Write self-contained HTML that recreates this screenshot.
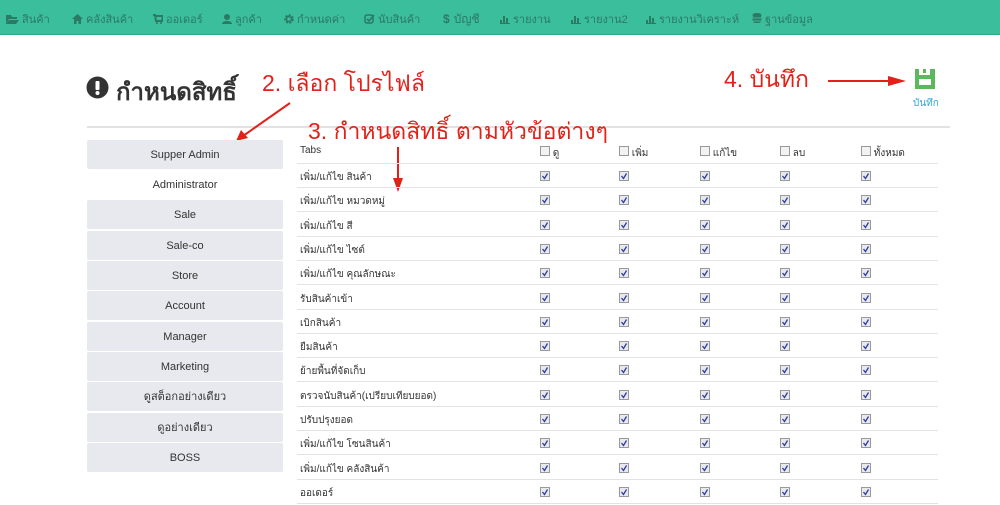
<!DOCTYPE html>
<html><head><meta charset="utf-8"><style>
*{margin:0;padding:0;box-sizing:border-box}
body{width:1000px;height:505px;overflow:hidden;background:#fff;font-family:"Liberation Sans","Noto Sans CJK SC",sans-serif;position:relative;color:#333}
.nav{position:absolute;left:0;top:0;width:1000px;height:35px;background:#3bbe9c;border-bottom:1px solid #2fa886}
.ni{position:absolute;top:10px;font-size:11px;color:#2b7a64;white-space:nowrap}
.ni svg{vertical-align:-1px;margin-right:3px}
.a{position:absolute;white-space:nowrap}
.sb{position:absolute;left:87px;width:196px;height:29px;background:#e7e9ee;font-size:11px;text-align:center;line-height:31px;color:#333;border-radius:2px}
.row{position:absolute;left:297px;width:641px;height:24px;border-bottom:1px solid #e3e3e3;font-size:10px;color:#333}
.row span{position:absolute;left:3px;top:6px}
.cb{position:absolute;top:7px;width:10px;height:10px}
.red{color:#e32119;font-size:23px;font-family:"Liberation Sans","Noto Sans CJK SC",sans-serif;font-weight:300}
</style></head><body>
<div class="nav">
<div class="ni" style="left:6px"><svg width="13" height="10"><path d="M0 1h5l1 2h5v2H3L0 10z M3 6h10l-3 4H0z" fill="#2b7a64"/></svg>สินค้า</div>
<div class="ni" style="left:72px"><svg width="11" height="10"><path d="M5.5 0L11 5H9v5H6.5V7h-2v3H2V5H0z" fill="#2b7a64"/></svg>คลังสินค้า</div>
<div class="ni" style="left:153px"><svg width="10" height="10"><path d="M0 1h2l1 6h6l1-5H3" fill="none" stroke="#2b7a64" stroke-width="2"/><circle cx="4" cy="9" r="1" fill="#2b7a64"/><circle cx="8" cy="9" r="1" fill="#2b7a64"/></svg>ออเดอร์</div>
<div class="ni" style="left:222px"><svg width="10" height="10"><circle cx="5" cy="3" r="3" fill="#2b7a64"/><path d="M0 10c0-4 10-4 10 0z" fill="#2b7a64"/></svg>ลูกค้า</div>
<div class="ni" style="left:284px"><svg width="10" height="10"><circle cx="5" cy="5" r="3.5" fill="none" stroke="#2b7a64" stroke-width="2.5" stroke-dasharray="2 1.2"/><circle cx="5" cy="5" r="2.5" fill="none" stroke="#2b7a64" stroke-width="1.5"/></svg>กำหนดค่า</div>
<div class="ni" style="left:364px"><svg width="11" height="10"><rect x="1" y="1" width="8" height="8" rx="2" fill="none" stroke="#2b7a64" stroke-width="1.5"/><path d="M3 5l2 2 5-6" fill="none" stroke="#2b7a64" stroke-width="1.6"/></svg>นับสินค้า</div>
<div class="ni" style="left:443px;font-size:12px"><b style="margin-right:4px">$</b>บัญชี</div>
<div class="ni" style="left:500px"><svg width="10" height="10"><path d="M0 10h10M1 6v4M4 2v8M7 4v6" stroke="#2b7a64" stroke-width="2"/></svg>รายงาน</div>
<div class="ni" style="left:571px"><svg width="10" height="10"><path d="M0 10h10M1 6v4M4 2v8M7 4v6" stroke="#2b7a64" stroke-width="2"/></svg>รายงาน2</div>
<div class="ni" style="left:646px"><svg width="10" height="10"><path d="M0 10h10M1 6v4M4 2v8M7 4v6" stroke="#2b7a64" stroke-width="2"/></svg>รายงานวิเคราะห์</div>
<div class="ni" style="left:752px"><svg width="10" height="11"><ellipse cx="5" cy="2" rx="4.5" ry="2" fill="#2b7a64"/><rect x=".5" y="2" width="9" height="8" rx="3" fill="#2b7a64"/><path d="M0 5h10M0 8h10" stroke="#3bbe9c"/></svg>ฐานข้อมูล</div>
</div>

<svg class="a" style="left:86px;top:76px" width="23" height="23"><circle cx="11.5" cy="11.5" r="11" fill="#333"/><rect x="9.5" y="5" width="4" height="9" rx="1" fill="#fff"/><circle cx="11.5" cy="17" r="2" fill="#fff"/></svg>
<div class="a" style="left:116px;top:72px;font-size:24px;font-weight:bold;color:#333">กำหนดสิทธิ์</div>
<div class="a" style="left:87px;top:126px;width:863px;height:2px;background:#e2e2e2"></div>

<div class="a red" style="left:262px;top:66px">2. เลือก โปรไฟล์</div>
<div class="a red" style="left:308px;top:114px">3. กำหนดสิทธิ์ ตามหัวข้อต่างๆ</div>
<div class="a red" style="left:724px;top:62px">4. บันทึก</div>
<svg class="a" style="left:0;top:0" width="1000" height="505">
<path d="M290 103L243 136" stroke="#e32119" stroke-width="2"/><path d="M236 141l5-11 7 8z" fill="#e32119"/>
<path d="M398 147v34" stroke="#e32119" stroke-width="2"/><path d="M393 178h10l-5 14z" fill="#e32119"/>
<path d="M828 81h63" stroke="#e32119" stroke-width="2"/><path d="M888 76l18 5-18 5z" fill="#e32119"/>
<path d="M915 69h4v6h11v-6h5v20h-20z" fill="#5cb85c"/><rect x="923" y="69" width="3" height="4" fill="#5cb85c"/><rect x="919" y="79" width="12" height="6" fill="#fff"/>
</svg>
<div class="a" style="left:913px;top:96px;font-size:10px;color:#2ea7d8">บันทึก</div>

<div class="sb" style="top:140px">Supper Admin</div>
<div class="sb" style="top:170px;background:#fff">Administrator</div>
<div class="sb" style="top:200px">Sale</div>
<div class="sb" style="top:231px">Sale-co</div>
<div class="sb" style="top:261px">Store</div>
<div class="sb" style="top:291px">Account</div>
<div class="sb" style="top:322px">Manager</div>
<div class="sb" style="top:352px">Marketing</div>
<div class="sb" style="top:382px">ดูสต็อกอย่างเดียว</div>
<div class="sb" style="top:413px">ดูอย่างเดียว</div>
<div class="sb" style="top:443px">BOSS</div>

<div class="row" style="top:140px"><span style="top:5px">Tabs</span>
<span style="left:243px"><svg width="10" height="10"><rect x=".5" y=".5" width="9" height="9" fill="#f2f2f2" stroke="#999"/></svg> ดู</span>
<span style="left:322px"><svg width="10" height="10"><rect x=".5" y=".5" width="9" height="9" fill="#f2f2f2" stroke="#999"/></svg> เพิ่ม</span>
<span style="left:403px"><svg width="10" height="10"><rect x=".5" y=".5" width="9" height="9" fill="#f2f2f2" stroke="#999"/></svg> แก้ไข</span>
<span style="left:483px"><svg width="10" height="10"><rect x=".5" y=".5" width="9" height="9" fill="#f2f2f2" stroke="#999"/></svg> ลบ</span>
<span style="left:564px"><svg width="10" height="10"><rect x=".5" y=".5" width="9" height="9" fill="#f2f2f2" stroke="#999"/></svg> ทั้งหมด</span>
</div>
<div id="rows"></div>
<script>
var n=["เพิ่ม/แก้ไข สินค้า","เพิ่ม/แก้ไข หมวดหมู่","เพิ่ม/แก้ไข สี","เพิ่ม/แก้ไข ไซต์","เพิ่ม/แก้ไข คุณลักษณะ","รับสินค้าเข้า","เบิกสินค้า","ยืมสินค้า","ย้ายพื้นที่จัดเก็บ","ตรวจนับสินค้า(เปรียบเทียบยอด)","ปรับปรุงยอด","เพิ่ม/แก้ไข โซนสินค้า","เพิ่ม/แก้ไข คลังสินค้า","ออเดอร์"];
var cb='<svg width="10" height="10"><rect x=".5" y=".5" width="9" height="9" fill="#e8e8ee" stroke="#999"/><path d="M2.5 5l2 2.5 3-5" fill="none" stroke="#2a3f9a" stroke-width="1.3"/></svg>';
var h='';var xs=[243,322,403,483,564];
for(var i=0;i<n.length;i++){var t=164+i*24.3;h+='<div class="row" style="top:'+t+'px"><span>'+n[i]+'</span>';
for(var j=0;j<5;j++)h+='<div class="cb" style="left:'+xs[j]+'px">'+cb+'</div>';h+='</div>';}
document.getElementById('rows').innerHTML=h;
</script>
</body></html>
